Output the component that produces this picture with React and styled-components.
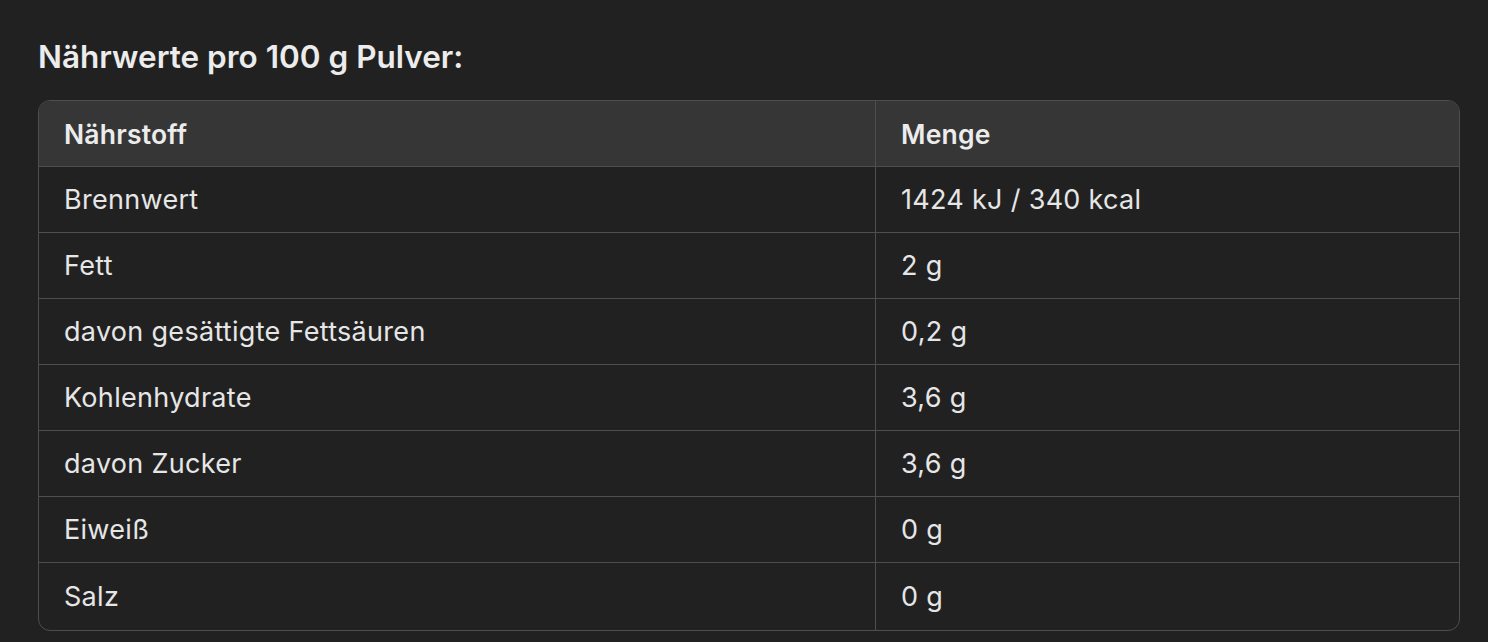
import React from 'react';
import styled, { createGlobalStyle } from 'styled-components';

const rows = [
  ['Brennwert', '1424 kJ / 340 kcal'],
  ['Fett', '2 g'],
  ['davon gesättigte Fettsäuren', '0,2 g'],
  ['Kohlenhydrate', '3,6 g'],
  ['davon Zucker', '3,6 g'],
  ['Eiweiß', '0 g'],
  ['Salz', '0 g'],
];

const App = () => {
  return (
    <Page>
      <GlobalStyle />
      <Heading>Nährwerte pro 100 g Pulver:</Heading>
      <TableWrap>
        <Table>
          <thead>
            <tr>
              <HeadCell>Nährstoff</HeadCell>
              <HeadCell>Menge</HeadCell>
            </tr>
          </thead>
          <tbody>
            {rows.map(([name, value], i) => (
              <tr key={name}>
                <Cell $last={i === rows.length - 1}>{name}</Cell>
                <Cell $last={i === rows.length - 1}>{value}</Cell>
              </tr>
            ))}
          </tbody>
        </Table>
      </TableWrap>
    </Page>
  );
};

const GlobalStyle = createGlobalStyle`
  html, body {
    margin: 0;
    background: #212121;
  }
  body {
    font-family: Inter, "Noto Sans", sans-serif;
    color: #ececec;
  }
`;

const Page = styled.main`
  padding: 37px 28px 0 38px;
  height: 642px;
  box-sizing: border-box;
  overflow: hidden;
`;

const Heading = styled.h3`
  margin: 0 0 23px;
  font-size: 31.5px;
  line-height: 40px;
  font-weight: 600;
  color: #ececec;
`;

const TableWrap = styled.div`
  border: 1px solid #4e4e4e;
  border-radius: 12px;
  overflow: hidden;
`;

const Table = styled.table`
  width: 100%;
  border-collapse: separate;
  border-spacing: 0;
  table-layout: fixed;
`;

const HeadCell = styled.th`
  background: #363636;
  height: 66px;
  padding: 0 25px;
  text-align: left;
  font-size: 26.5px;
  font-weight: 600;
  color: #ececec;
  letter-spacing: 0.2px;
  border-bottom: 1px solid #4e4e4e;
  box-sizing: border-box;

  &:first-child {
    width: 837px;
    border-right: 1px solid #4e4e4e;
  }
`;

const Cell = styled.td`
  height: ${(p) => (p.$last ? '67px' : '66px')};
  box-sizing: border-box;
  padding: 0 25px;
  font-size: 27px;
  font-weight: 400;
  letter-spacing: 0.3px;
  color: #e6e6e6;
  border-bottom: ${(p) => (p.$last ? 'none' : '1px solid #4e4e4e')};

  &:first-child {
    border-right: 1px solid #4e4e4e;
  }
`;

export default App;
